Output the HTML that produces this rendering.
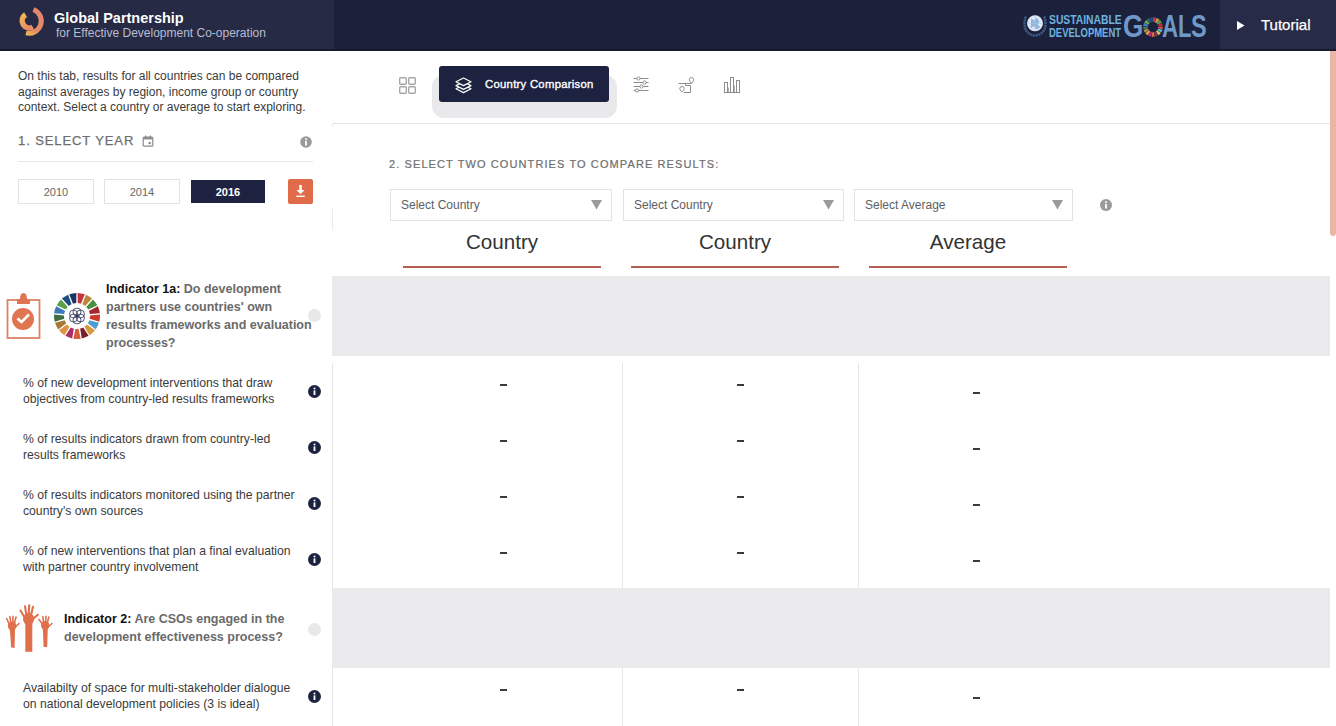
<!DOCTYPE html>
<html><head><meta charset="utf-8">
<style>
*{margin:0;padding:0;box-sizing:border-box}
html,body{width:1336px;height:726px;overflow:hidden;background:#fff;font-family:"Liberation Sans",sans-serif;color:#333}
.abs{position:absolute}
svg{position:absolute;overflow:visible}
#hdr{position:absolute;left:0;top:0;width:1336px;height:51px;background:#1b213b}
#hdrL{position:absolute;left:0;top:0;width:333.5px;height:49px;background:#262a45}
#hdrR{position:absolute;left:1220px;top:0;width:116px;height:49px;background:#282b47}
#hdrB{position:absolute;left:0;top:49px;width:1336px;height:2px;background:#181a2f}
.t{position:absolute;white-space:nowrap;line-height:1}
.it{position:absolute;left:23px;font-size:12.2px;line-height:16px;color:#3a3a3a;white-space:nowrap}
.ind{position:absolute;font-size:12.5px;line-height:18px;font-weight:bold;color:#6a6a6a;white-space:nowrap}
.ind b{color:#111}
.dash{position:absolute;width:7px;height:2px;background:#3a3a3a}
.box{position:absolute;border:1px solid #e3e3e6}
.gcirc{position:absolute;width:13px;height:13px;border-radius:50%;background:#e8e8eb}
</style></head><body>
<div id="hdr"></div><div id="hdrL"></div><div id="hdrR"></div><div id="hdrB"></div>

<!-- GPEDC logo -->
<svg style="left:0;top:0" width="60" height="50" viewBox="0 0 60 50">
  <defs>
    <linearGradient id="lg1" x1="0" y1="0" x2="0.6" y2="1"><stop offset="0" stop-color="#f3b653"/><stop offset="1" stop-color="#e58c66"/></linearGradient>
    <linearGradient id="lg2" x1="0.3" y1="0" x2="0" y2="1"><stop offset="0" stop-color="#e3886e"/><stop offset="0.7" stop-color="#e58a66"/><stop offset="1" stop-color="#efb055"/></linearGradient>
  </defs>
  <path d="M25.60 14.60 A7.25 7.25 0 0 0 32.84 27.15" fill="none" stroke="url(#lg1)" stroke-width="5.5"/>
  <path d="M33.41 9.52 A12.3 12.3 0 0 1 26.02 32.93" fill="none" stroke="url(#lg2)" stroke-width="5"/>
</svg>
<div class="t" id="gp" style="left:54px;top:10.5px;font-size:14.5px;font-weight:bold;color:#fff">Global Partnership</div>
<div class="t" id="gp2" style="left:56px;top:26.5px;font-size:12px;color:#b9bccf">for Effective Development Co-operation</div>

<!-- SDG logo -->
<svg style="left:1022px;top:12px" width="26" height="26" viewBox="0 0 26 26">
  <path d="M3.8 4.5 Q1.2 12 3.8 18 Q7 23 13 23.5 Q19 23 22.2 18 Q24.8 12 22.2 4.5" fill="none" stroke="#3d5a88" stroke-width="2.4" stroke-dasharray="2.2 0.6"/>
  <circle cx="13" cy="11.3" r="8" fill="#dfe9f6"/>
  <path d="M9 6.5l3.5 2 2-3 3 4-2 3 3 2.5-4 2.5-2.5-3.5-3.5 2.5 0.5-4z" fill="#8fb4de"/>
  <path d="M13 3.3V19.3M5 11.3H21" stroke="#b0c8e6" stroke-width="0.6"/>
</svg>
<div class="t" style="left:1048.5px;top:14.4px;font-size:12.5px;font-weight:bold;color:#6fb3e0;transform:scaleX(0.825);transform-origin:0 0">SUSTAINABLE</div>
<div class="t" style="left:1048.5px;top:26.7px;font-size:12.5px;font-weight:bold;color:#6fb3e0;transform:scaleX(0.757);transform-origin:0 0">DEVELOPMENT</div>
<div class="t" id="sG" style="left:1123px;top:11.2px;font-size:30.5px;font-weight:bold;color:#7099c9;transform:scaleX(0.857);transform-origin:0 0">G</div>
<svg style="left:1142.6px;top:16.5px" width="20" height="20" viewBox="-10 -10 20 20"><circle r="7.5" fill="none" stroke="#c9404a" stroke-width="4.6" stroke-dasharray="2.422 44.702" stroke-dashoffset="11.781"/><circle r="7.5" fill="none" stroke="#caa050" stroke-width="4.6" stroke-dasharray="2.422 44.702" stroke-dashoffset="9.009"/><circle r="7.5" fill="none" stroke="#5a9e50" stroke-width="4.6" stroke-dasharray="2.422 44.702" stroke-dashoffset="6.237"/><circle r="7.5" fill="none" stroke="#b03040" stroke-width="4.6" stroke-dasharray="2.422 44.702" stroke-dashoffset="3.465"/><circle r="7.5" fill="none" stroke="#d85040" stroke-width="4.6" stroke-dasharray="2.422 44.702" stroke-dashoffset="0.693"/><circle r="7.5" fill="none" stroke="#60b0d8" stroke-width="4.6" stroke-dasharray="2.422 44.702" stroke-dashoffset="-2.079"/><circle r="7.5" fill="none" stroke="#e0c060" stroke-width="4.6" stroke-dasharray="2.422 44.702" stroke-dashoffset="-4.851"/><circle r="7.5" fill="none" stroke="#903050" stroke-width="4.6" stroke-dasharray="2.422 44.702" stroke-dashoffset="-7.623"/><circle r="7.5" fill="none" stroke="#e07040" stroke-width="4.6" stroke-dasharray="2.422 44.702" stroke-dashoffset="-10.395"/><circle r="7.5" fill="none" stroke="#c03070" stroke-width="4.6" stroke-dasharray="2.422 44.702" stroke-dashoffset="-13.167"/><circle r="7.5" fill="none" stroke="#e0a050" stroke-width="4.6" stroke-dasharray="2.422 44.702" stroke-dashoffset="-15.939"/><circle r="7.5" fill="none" stroke="#b09050" stroke-width="4.6" stroke-dasharray="2.422 44.702" stroke-dashoffset="-18.711"/><circle r="7.5" fill="none" stroke="#4a7a50" stroke-width="4.6" stroke-dasharray="2.422 44.702" stroke-dashoffset="-21.483"/><circle r="7.5" fill="none" stroke="#3a80c0" stroke-width="4.6" stroke-dasharray="2.422 44.702" stroke-dashoffset="-24.255"/><circle r="7.5" fill="none" stroke="#70b050" stroke-width="4.6" stroke-dasharray="2.422 44.702" stroke-dashoffset="-27.027"/><circle r="7.5" fill="none" stroke="#2a6090" stroke-width="4.6" stroke-dasharray="2.422 44.702" stroke-dashoffset="-29.799"/><circle r="7.5" fill="none" stroke="#2a4a70" stroke-width="4.6" stroke-dasharray="2.422 44.702" stroke-dashoffset="-32.571"/></svg>
<div class="t" id="sA" style="left:1161.5px;top:11.2px;font-size:30.5px;font-weight:bold;color:#7099c9;transform:scaleX(0.73);transform-origin:0 0">A</div>
<div class="t" id="sL" style="left:1177.8px;top:11.2px;font-size:30.5px;font-weight:bold;color:#7099c9;transform:scaleX(0.72);transform-origin:0 0">L</div>
<div class="t" id="sS" style="left:1190.5px;top:11.2px;font-size:30.5px;font-weight:bold;color:#7099c9;transform:scaleX(0.77);transform-origin:0 0">S</div>

<!-- Tutorial -->
<svg style="left:1237px;top:20.5px" width="8" height="9" viewBox="0 0 8 9"><path d="M0 0L7.5 4.5L0 9Z" fill="#fff"/></svg>
<div class="t" id="tut" style="left:1261px;top:17.1px;font-size:15px;color:#fff;-webkit-text-stroke:0.25px #fff">Tutorial</div>

<!-- left panel -->
<div class="t" id="intro" style="left:18px;top:69px;font-size:12px;line-height:15.5px;color:#3a3a3a">On this tab, results for all countries can be compared<br>against averages by region, income group or country<br>context. Select a country or average to start exploring.</div>
<div class="t" id="sy" style="left:18px;top:134.1px;font-size:13px;letter-spacing:0.9px;color:#6e6e6e;-webkit-text-stroke:0.25px #6e6e6e">1. SELECT YEAR</div>
<svg style="left:142px;top:135px" width="12" height="12" viewBox="0 0 12 12">
  <rect x="1.2" y="2.2" width="9.6" height="9" rx="1" fill="none" stroke="#8a8a8a" stroke-width="1.2"/>
  <rect x="1.2" y="2.2" width="9.6" height="2.2" fill="#8a8a8a"/>
  <rect x="3" y="0.5" width="1.2" height="2" fill="#8a8a8a"/><rect x="7.8" y="0.5" width="1.2" height="2" fill="#8a8a8a"/>
  <rect x="6.6" y="7" width="2.2" height="2.2" fill="#8a8a8a"/>
</svg>
<svg style="left:300px;top:135.5px" width="12" height="12" viewBox="0 0 12 12">
  <circle cx="6" cy="6" r="5.8" fill="#9a9a9a"/>
  <rect x="5.1" y="5" width="1.8" height="4.5" fill="#fff"/><circle cx="6" cy="3.3" r="1" fill="#fff"/>
</svg>
<div class="abs" style="left:18px;top:161px;width:295px;height:1px;background:#e6e6ea"></div>
<div class="box" style="left:18px;top:179px;width:76px;height:25px"></div>
<div class="box" style="left:104px;top:179px;width:76px;height:25px"></div>
<div class="abs" style="left:191px;top:180px;width:74px;height:23px;background:#1d2240"></div>
<div class="t" style="left:18px;top:186.6px;width:76px;text-align:center;font-size:11px;color:#666">2010</div>
<div class="t" style="left:104px;top:186.6px;width:76px;text-align:center;font-size:11px;color:#666">2014</div>
<div class="t" style="left:191px;top:186.6px;width:74px;text-align:center;font-size:11px;font-weight:bold;color:#fff">2016</div>
<div class="abs" style="left:288px;top:179px;width:25px;height:25px;background:#e06b48;border-radius:2px"></div>
<svg style="left:288px;top:179px" width="25" height="25" viewBox="0 0 25 25">
  <path d="M11.2 6h2.6v5h2.8l-4.1 4.3-4.1-4.3h2.8z" fill="#fff"/>
  <rect x="8.2" y="16.6" width="8.6" height="1.4" fill="#fff"/>
</svg>

<!-- indicator 1a -->
<svg style="left:6px;top:292px" width="36" height="48" viewBox="0 0 36 48">
  <rect x="1.5" y="8" width="32" height="38" fill="#fff" stroke="#d98468" stroke-width="1.8"/>
  <path d="M11 12 V8.5 Q11 7 13 7 H14 Q14 1 17.5 1 Q21 1 21 7 H22 Q24 7 24 8.5 V12Z" fill="#e07552"/>
  <circle cx="17" cy="27" r="11" fill="#e07552"/>
  <path d="M11.5 26.5 L15.5 30 L23 22.5" fill="none" stroke="#fff" stroke-width="2.6"/>
</svg>
<svg style="left:76.7px;top:315.5px" width="1" height="1" viewBox="0 0 1 1">
  <path d="M0.6 -22.99A23 23 0 0 1 7.74 -21.66L3.99 -12.37A13 13 0 0 0 0.75 -12.98Z" fill="#c8323c"/><path d="M8.87 -21.22A23 23 0 0 1 15.04 -17.4L8.19 -10.1A13 13 0 0 0 5.39 -11.83Z" fill="#b8873a"/><path d="M15.93 -16.59A23 23 0 0 1 20.31 -10.79L11.28 -6.45A13 13 0 0 0 9.3 -9.09Z" fill="#4a9040"/><path d="M20.85 -9.71A23 23 0 0 1 22.84 -2.72L12.85 -1.94A13 13 0 0 0 11.95 -5.12Z" fill="#a52530"/><path d="M22.95 -1.52A23 23 0 0 1 22.28 5.71L12.69 2.83A13 13 0 0 0 12.99 -0.45Z" fill="#c83a2a"/><path d="M21.95 6.87A23 23 0 0 1 18.71 13.38L10.81 7.22A13 13 0 0 0 12.28 4.27Z" fill="#4a9fd0"/><path d="M17.99 14.34A23 23 0 0 1 12.62 19.23L7.47 10.64A13 13 0 0 0 9.91 8.42Z" fill="#d89a3a"/><path d="M11.59 19.87A23 23 0 0 1 4.82 22.49L3.12 12.62A13 13 0 0 0 6.2 11.43Z" fill="#7e1e2a"/><path d="M3.63 22.71A23 23 0 0 1 -3.63 22.71L-1.65 12.89A13 13 0 0 0 1.65 12.89Z" fill="#d4603a"/><path d="M-4.82 22.49A23 23 0 0 1 -11.59 19.87L-6.2 11.43A13 13 0 0 0 -3.12 12.62Z" fill="#a82d68"/><path d="M-12.62 19.23A23 23 0 0 1 -17.99 14.34L-9.91 8.42A13 13 0 0 0 -7.47 10.64Z" fill="#de9440"/><path d="M-18.71 13.38A23 23 0 0 1 -21.95 6.87L-12.28 4.27A13 13 0 0 0 -10.81 7.22Z" fill="#a87834"/><path d="M-22.28 5.71A23 23 0 0 1 -22.95 -1.52L-12.99 -0.45A13 13 0 0 0 -12.69 2.83Z" fill="#3f6e40"/><path d="M-22.84 -2.72A23 23 0 0 1 -20.85 -9.71L-11.95 -5.12A13 13 0 0 0 -12.85 -1.94Z" fill="#3a78b8"/><path d="M-20.31 -10.79A23 23 0 0 1 -15.93 -16.59L-9.3 -9.09A13 13 0 0 0 -11.28 -6.45Z" fill="#5aa04a"/><path d="M-15.04 -17.4A23 23 0 0 1 -8.87 -21.22L-5.39 -11.83A13 13 0 0 0 -8.19 -10.1Z" fill="#1f4f80"/><path d="M-7.74 -21.66A23 23 0 0 1 -0.6 -22.99L-0.75 -12.98A13 13 0 0 0 -3.99 -12.37Z" fill="#1c3560"/>
  <g fill="none" stroke="#2a2f55" stroke-width="0.8"><circle cx="0.00" cy="4.00" r="4"/><circle cx="-3.46" cy="2.00" r="4"/><circle cx="-3.46" cy="-2.00" r="4"/><circle cx="-0.00" cy="-4.00" r="4"/><circle cx="3.46" cy="-2.00" r="4"/><circle cx="3.46" cy="2.00" r="4"/></g>
</svg>
<div class="ind" style="left:106px;top:279.7px"><b>Indicator 1a:</b> Do development<br>partners use countries' own<br>results frameworks and evaluation<br>processes?</div>
<div class="gcirc" style="left:307.5px;top:308.5px"></div>

<div class="it" style="top:375px">% of new development interventions that draw<br>objectives from country-led results frameworks</div>
<div class="it" style="top:431px">% of results indicators drawn from country-led<br>results frameworks</div>
<div class="it" style="top:487px">% of results indicators monitored using the partner<br>country's own sources</div>
<div class="it" style="top:543px">% of new interventions that plan a final evaluation<br>with partner country involvement</div>

<!-- indicator 2 -->
<svg style="left:4px;top:603px" width="50" height="50" viewBox="0 0 50 50">
  <g fill="#e0704c" stroke="#e0704c" stroke-linecap="round">
    <path d="M5.8 26 L11 26 L10.6 45 L7.2 44.5Z" stroke="none"/>
    <ellipse cx="8.2" cy="23" rx="4.3" ry="4.6" stroke="none"/>
    <path d="M5.2 21 L2.6 15.5 M6.8 19.5 L5.8 13.6 M8.8 19 L9 13.2 M10.6 19.5 L12 14 M11.8 23.5 L15 20.5" fill="none" stroke-width="1.6"/>
    <path d="M21.3 20 L28.3 20 L28.3 48.8 L21.3 48.8Z" stroke="none"/>
    <ellipse cx="24.6" cy="16" rx="5.6" ry="6" stroke="none"/>
    <path d="M20 13.5 L16.5 7.5 M22.2 11 L21 3.2 M24.8 10.5 L25.2 2.2 M27.3 11 L29 3.8 M29.5 15.5 L33.8 11.8" fill="none" stroke-width="2.1"/>
    <path d="M38.8 25.5 L43.8 25.5 L43.2 44 L39.6 44Z" stroke="none"/>
    <ellipse cx="41.2" cy="22.5" rx="4.1" ry="4.5" stroke="none"/>
    <path d="M38 20.5 L35 16.5 M39.6 19.5 L38.8 13.6 M41.6 19 L42 13.2 M43.4 19.5 L44.8 14 M44.6 23.5 L48 20.5" fill="none" stroke-width="1.6"/>
  </g>
</svg>
<div class="ind" style="left:64px;top:609.7px"><b>Indicator 2:</b> Are CSOs engaged in the<br>development effectiveness process?</div>
<div class="gcirc" style="left:307.5px;top:622.5px"></div>
<div class="it" style="top:680.2px">Availabilty of space for multi-stakeholder dialogue<br>on national development policies (3 is ideal)</div>

<!-- dark info icons -->
<svg style="left:307.5px;top:385.3px" width="13" height="13" viewBox="0 0 13 13"><circle cx="6.5" cy="6.5" r="6.5" fill="#1d2240"/><rect x="5.6" y="5.4" width="1.8" height="4.6" fill="#fff"/><circle cx="6.5" cy="3.6" r="1" fill="#fff"/></svg>
<svg style="left:307.5px;top:441.3px" width="13" height="13" viewBox="0 0 13 13"><circle cx="6.5" cy="6.5" r="6.5" fill="#1d2240"/><rect x="5.6" y="5.4" width="1.8" height="4.6" fill="#fff"/><circle cx="6.5" cy="3.6" r="1" fill="#fff"/></svg>
<svg style="left:307.5px;top:497.3px" width="13" height="13" viewBox="0 0 13 13"><circle cx="6.5" cy="6.5" r="6.5" fill="#1d2240"/><rect x="5.6" y="5.4" width="1.8" height="4.6" fill="#fff"/><circle cx="6.5" cy="3.6" r="1" fill="#fff"/></svg>
<svg style="left:307.5px;top:553.3px" width="13" height="13" viewBox="0 0 13 13"><circle cx="6.5" cy="6.5" r="6.5" fill="#1d2240"/><rect x="5.6" y="5.4" width="1.8" height="4.6" fill="#fff"/><circle cx="6.5" cy="3.6" r="1" fill="#fff"/></svg>
<svg style="left:307.5px;top:690.3px" width="13" height="13" viewBox="0 0 13 13"><circle cx="6.5" cy="6.5" r="6.5" fill="#1d2240"/><rect x="5.6" y="5.4" width="1.8" height="4.6" fill="#fff"/><circle cx="6.5" cy="3.6" r="1" fill="#fff"/></svg>

<!-- tabs -->
<svg style="left:399px;top:77px" width="17" height="17" viewBox="0 0 17 17">
  <g fill="none" stroke="#a8a8a8" stroke-width="1.4"><rect x="0.7" y="0.7" width="6.6" height="6.6" rx="1"/><rect x="9.7" y="0.7" width="6.6" height="6.6" rx="1"/><rect x="0.7" y="9.7" width="6.6" height="6.6" rx="1"/><rect x="9.7" y="9.7" width="6.6" height="6.6" rx="1"/></g>
</svg>
<div class="abs" style="left:432px;top:75px;width:185px;height:43px;background:#e9e9ec;border-radius:12px"></div>
<div class="abs" style="left:439px;top:66px;width:170px;height:36px;background:#1d2240;border-radius:3px"></div>
<svg style="left:455px;top:76.5px" width="17" height="17" viewBox="0 0 17 17">
  <g fill="#1d2240" stroke="#fff" stroke-width="1.2" stroke-linejoin="round">
    <path d="M8.5 8 L16 11.8 L8.5 15.6 L1 11.8Z"/><path d="M8.5 4.8 L16 8.6 L8.5 12.4 L1 8.6Z"/><path d="M8.5 1 L16 4.8 L8.5 8.6 L1 4.8Z"/>
  </g>
</svg>
<div class="t" id="cc" style="left:485px;top:78.6px;font-size:11.3px;font-weight:normal;color:#fff;-webkit-text-stroke:0.35px #fff;letter-spacing:0.28px">Country Comparison</div>
<svg style="left:633px;top:77px" width="17" height="17" viewBox="0 0 17 17">
  <g fill="#fff" stroke="#8c8c8c" stroke-width="1">
    <path d="M0.5 1.5H15.5M0.5 5.5H15.5M0.5 9.5H15.5M0.5 13.5H15.5" fill="none"/>
    <circle cx="5.5" cy="1.5" r="1.6"/><circle cx="11.5" cy="5.5" r="1.6"/><circle cx="8.5" cy="9.5" r="1.6"/><circle cx="4" cy="13.5" r="1.6"/>
  </g>
</svg>
<svg style="left:677px;top:76px" width="18" height="18" viewBox="0 0 18 18">
  <g fill="none" stroke="#8c8c8c" stroke-width="1">
    <path d="M14.5 1.5 a2.2 2.2 0 0 1 2.2 2.2 c0 1.4-2.2 3.6-2.2 3.6 s-2.2-2.2-2.2-3.6 a2.2 2.2 0 0 1 2.2-2.2z"/>
    <path d="M14.5 7.5 H1.5 M8.5 7.5 V9.5 H13.5 V16.5 H6.5"/>
    <path d="M5 10.5 a2.2 2.2 0 0 1 2.2 2.2 c0 1.4-2.2 3.3-2.2 3.3 s-2.2-1.9-2.2-3.3 a2.2 2.2 0 0 1 2.2-2.2z"/>
  </g>
</svg>
<svg style="left:723px;top:76px" width="18" height="18" viewBox="0 0 18 18">
  <g fill="none" stroke="#8c8c8c" stroke-width="1">
    <path d="M1 16.5H17"/><rect x="1.5" y="6.5" width="3" height="10"/><rect x="7.5" y="1.5" width="3" height="15"/><rect x="13.5" y="4.5" width="3" height="12"/>
    <path d="M5.5 16 V11.5 M11.5 16 V9.5" stroke="#b0b0b0"/>
  </g>
</svg>
<div class="abs" style="left:333px;top:123px;width:1003px;height:1px;background:#e6e6e9"></div>

<div class="abs" style="left:332px;top:209px;width:1px;height:21px;background:#ececef"></div>
<div class="abs" style="left:332px;top:123px;width:1px;height:4px;background:#ececef"></div>
<!-- section 2 -->
<div class="t" id="s2" style="left:389px;top:158.7px;font-size:11px;letter-spacing:1.1px;color:#6e6e6e;-webkit-text-stroke:0.2px #6e6e6e">2. SELECT TWO COUNTRIES TO COMPARE RESULTS:</div>
<div class="box" style="left:390px;top:189px;width:222px;height:32px"></div>
<div class="box" style="left:623px;top:189px;width:221px;height:32px"></div>
<div class="box" style="left:854px;top:189px;width:219px;height:32px"></div>
<div class="t" id="sc1" style="left:401px;top:198.9px;font-size:12px;color:#5e5e5e">Select Country</div>
<div class="t" id="sc2" style="left:634px;top:198.9px;font-size:12px;color:#5e5e5e">Select Country</div>
<div class="t" id="sc3" style="left:865px;top:198.9px;font-size:12px;color:#5e5e5e">Select Average</div>
<svg style="left:590.5px;top:200px" width="11" height="10" viewBox="0 0 11 10"><path d="M0 0H11L5.5 9.5Z" fill="#9a9a9a"/></svg>
<svg style="left:822.5px;top:200px" width="11" height="10" viewBox="0 0 11 10"><path d="M0 0H11L5.5 9.5Z" fill="#9a9a9a"/></svg>
<svg style="left:1052px;top:200px" width="11" height="10" viewBox="0 0 11 10"><path d="M0 0H11L5.5 9.5Z" fill="#9a9a9a"/></svg>
<svg style="left:1100px;top:199px" width="12" height="12" viewBox="0 0 12 12">
  <circle cx="6" cy="6" r="6" fill="#9a9a9a"/>
  <rect x="5.1" y="5" width="1.8" height="4.5" fill="#fff"/><circle cx="6" cy="3.3" r="1" fill="#fff"/>
</svg>

<div class="t" id="h1" style="left:402px;top:232.4px;width:200px;text-align:center;font-size:20.6px;color:#333">Country</div>
<div class="t" id="h2" style="left:635px;top:232.4px;width:200px;text-align:center;font-size:20.6px;color:#333">Country</div>
<div class="t" id="h3" style="left:868px;top:232.4px;width:200px;text-align:center;font-size:20.6px;color:#333">Average</div>
<div class="abs" style="left:403px;top:266px;width:198px;height:2px;background:#b35e50"></div>
<div class="abs" style="left:631px;top:266px;width:208px;height:2px;background:#b35e50"></div>
<div class="abs" style="left:869px;top:266px;width:198px;height:2px;background:#b35e50"></div>

<!-- table -->
<div class="abs" style="left:332px;top:276px;width:998px;height:80px;background:#eaeaed"></div>
<div class="abs" style="left:332px;top:588px;width:998px;height:80px;background:#eaeaed"></div>
<div class="abs" style="left:332px;top:363px;width:1px;height:225px;background:#e6e6e9"></div>
<div class="abs" style="left:622px;top:363px;width:1px;height:225px;background:#e6e6e9"></div>
<div class="abs" style="left:858px;top:363px;width:1px;height:225px;background:#e6e6e9"></div>
<div class="abs" style="left:332px;top:668px;width:1px;height:58px;background:#e6e6e9"></div>
<div class="abs" style="left:622px;top:668px;width:1px;height:58px;background:#e6e6e9"></div>
<div class="abs" style="left:858px;top:668px;width:1px;height:58px;background:#e6e6e9"></div>

<div class="dash" style="left:500px;top:384px"></div><div class="dash" style="left:737px;top:384px"></div><div class="dash" style="left:973px;top:392px"></div>
<div class="dash" style="left:500px;top:440px"></div><div class="dash" style="left:737px;top:440px"></div><div class="dash" style="left:973px;top:448px"></div>
<div class="dash" style="left:500px;top:496px"></div><div class="dash" style="left:737px;top:496px"></div><div class="dash" style="left:973px;top:504px"></div>
<div class="dash" style="left:500px;top:552px"></div><div class="dash" style="left:737px;top:552px"></div><div class="dash" style="left:973px;top:560px"></div>
<div class="dash" style="left:500px;top:689px"></div><div class="dash" style="left:737px;top:689px"></div><div class="dash" style="left:973px;top:697px"></div>

<!-- scrollbar -->
<div class="abs" style="left:1330px;top:51px;width:6px;height:185px;background:#ebb5a3;border-radius:0 0 3px 3px"></div>
</body></html>
